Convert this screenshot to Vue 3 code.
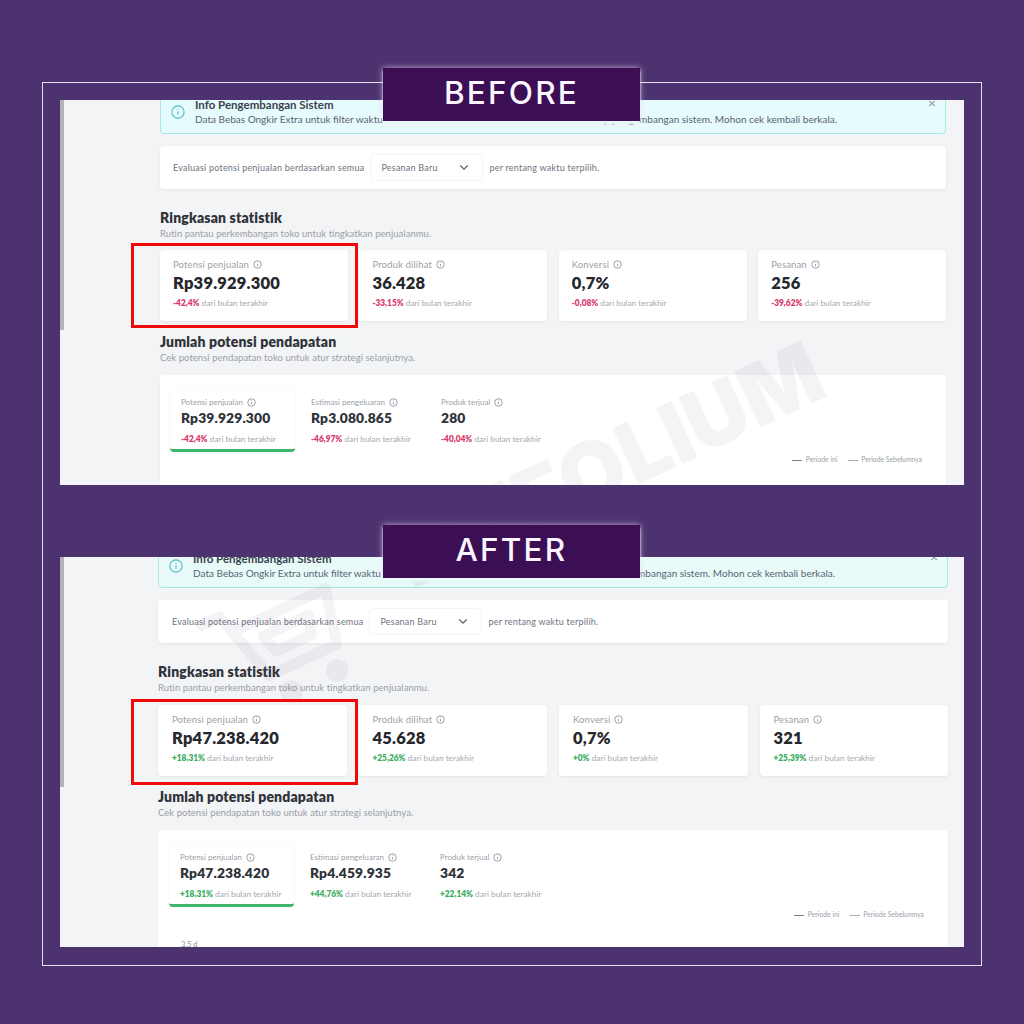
<template>
  <div class="page">
    <div class="frame">
      <section
        v-for="shot in shots"
        :key="shot.badge"
        :class="['shot-wrap', `shot-${shot.badge.toLowerCase()}`]"
      >
        <div class="shot">
          <span class="strip"></span>

          <!-- Alert, top part is cut off by the screenshot -->
          <div class="alert">
            <svg class="alert-icon" viewBox="0 0 16 16">
              <circle cx="8" cy="8" r="7" />
              <path d="M8 7.2v4M8 4.4v.9" />
            </svg>
            <div class="alert-text">
              <h4>Info Pengembangan Sistem</h4>
              <p>Data Bebas Ongkir Extra untuk filter waktu tertentu saat ini belum tersedia karena dalam tahap pengembangan sistem. Mohon cek kembali berkala.</p>
            </div>
            <span class="close">×</span>
          </div>

          <!-- Filter -->
          <div class="filter">
            <span>Evaluasi potensi penjualan berdasarkan semua</span>
            <div class="select">
              <span>Pesanan Baru</span>
              <svg viewBox="0 0 12 8"><path d="M1.5 1.5 6 6l4.5-4.5" /></svg>
            </div>
            <span>per rentang waktu terpilih.</span>
          </div>

          <h3 class="section-title first">Ringkasan statistik</h3>
          <p class="section-sub">Rutin pantau perkembangan toko untuk tingkatkan penjualanmu.</p>

          <div class="stat-grid">
            <div v-for="s in shot.stats" :key="s.label" class="stat-card">
              <div class="stat-label">
                {{ s.label }}
                <svg class="info" viewBox="0 0 12 12">
                  <circle cx="6" cy="6" r="5" />
                  <path d="M6 5.4v3M6 3.3v.7" />
                </svg>
              </div>
              <div class="stat-value">{{ s.value }}</div>
              <div class="stat-change">
                <b :class="shot.trend">{{ s.change }}</b> dari bulan terakhir
              </div>
            </div>
          </div>

          <h3 class="section-title second">Jumlah potensi pendapatan</h3>
          <p class="section-sub">Cek potensi pendapatan toko untuk atur strategi selanjutnya.</p>

          <div class="income-card">
            <div class="tabs">
              <div
                v-for="(t, i) in shot.tabs"
                :key="t.label"
                :class="['tab', { active: i === 0 }]"
              >
                <div class="tab-label">
                  {{ t.label }}
                  <svg class="info" viewBox="0 0 12 12">
                    <circle cx="6" cy="6" r="5" />
                    <path d="M6 5.4v3M6 3.3v.7" />
                  </svg>
                </div>
                <div class="tab-value">{{ t.value }}</div>
                <div class="tab-change">
                  <b :class="shot.trend">{{ t.change }}</b> dari bulan terakhir
                </div>
              </div>
            </div>
            <div class="legend">
              <span><i class="line"></i> Periode ini</span>
              <span><i class="line dashed"></i> Periode Sebelumnya</span>
            </div>
            <div v-if="shot.axis" class="axis">{{ shot.axis }}</div>
          </div>
        </div>

        <div class="badge">{{ shot.badge }}</div>
        <div class="highlight"></div>
      </section>
    </div>

    <!-- Watermark -->
    <svg class="wm-logo" viewBox="0 0 170 130">
      <g transform="translate(12 50) rotate(-25) scale(1.2)">
        <path d="M0 0h16l17 62h62l11-46H24" />
        <path d="M42 30h42l-5 16H47z" />
        <circle cx="44" cy="82" r="5" />
        <circle cx="86" cy="82" r="5" />
      </g>
    </svg>
    <div class="wm-text">LITFOLIUM</div>
  </div>
</template>

<script setup>
const shots = [
  {
    badge: 'BEFORE',
    trend: 'down',
    stats: [
      { label: 'Potensi penjualan', value: 'Rp39.929.300', change: '-42,4%' },
      { label: 'Produk dilihat', value: '36.428', change: '-33,15%' },
      { label: 'Konversi', value: '0,7%', change: '-0,08%' },
      { label: 'Pesanan', value: '256', change: '-39,62%' },
    ],
    tabs: [
      { label: 'Potensi penjualan', value: 'Rp39.929.300', change: '-42,4%' },
      { label: 'Estimasi pengeluaran', value: 'Rp3.080.865', change: '-46,97%' },
      { label: 'Produk terjual', value: '280', change: '-40,04%' },
    ],
  },
  {
    badge: 'AFTER',
    trend: 'up',
    axis: '3,5 d',
    stats: [
      { label: 'Potensi penjualan', value: 'Rp47.238.420', change: '+18,31%' },
      { label: 'Produk dilihat', value: '45.628', change: '+25,26%' },
      { label: 'Konversi', value: '0,7%', change: '+0%' },
      { label: 'Pesanan', value: '321', change: '+25,39%' },
    ],
    tabs: [
      { label: 'Potensi penjualan', value: 'Rp47.238.420', change: '+18,31%' },
      { label: 'Estimasi pengeluaran', value: 'Rp4.459.935', change: '+44,76%' },
      { label: 'Produk terjual', value: '342', change: '+22,14%' },
    ],
  },
]
</script>

<style scoped>
.page {
  position: relative;
  width: 1024px;
  height: 1024px;
  overflow: hidden;
  box-sizing: border-box;
  padding: 82px 42px 0;
  background: #4d3270;
  font-family: "Lato", "Noto Sans", sans-serif;
}
.frame {
  display: flex;
  flex-direction: column;
  gap: 72px;
  box-sizing: border-box;
  height: 884px;
  padding: 17px;
  border: 1px solid #e6def0;
}

/* SCREENSHOT */
.shot-wrap { position: relative; }
.shot {
  position: relative;
  height: 385px;
  overflow: hidden;
  box-sizing: border-box;
  padding: 0 18px 0 100px;
  background: #f3f4f6;
}
.shot-after .shot {
  height: 390px;
  padding: 0 16px 0 98px;
}
.strip {
  position: absolute;
  left: 0;
  top: 0;
  width: 4px;
  height: 230px;
  background: #b4b3ba;
}

/* ALERT */
.alert {
  display: flex;
  position: relative;
  gap: 10px;
  align-items: center;
  box-sizing: border-box;
  height: 50px;
  margin-top: -16px;
  padding: 8px 10px;
  border: 1px solid #a5e8e6;
  border-radius: 4px;
  background: #e6fbfc;
}
.shot-after .alert {
  margin-top: -19px;
  background: #e8fbf9;
}
.alert-icon {
  flex: none;
  width: 14px;
  height: 14px;
  margin-top: 6px;
  fill: none;
  stroke: #4cbcc6;
  stroke-width: 1.2;
}
.alert-text { padding-top: 5px; }
.alert h4 {
  margin: 0 0 2px;
  font-size: 11.5px;
  font-weight: 700;
  line-height: 13px;
  color: #3b4250;
}
.alert p {
  margin: 0;
  font-size: 10px;
  line-height: 13px;
  white-space: nowrap;
  color: #596273;
}
.close {
  position: absolute;
  top: 11px;
  right: 9px;
  font-size: 14px;
  line-height: 14px;
  color: #8a94a0;
}

/* FILTER */
.filter {
  display: flex;
  align-items: center;
  gap: 6px;
  box-sizing: border-box;
  height: 43px;
  margin-top: 12px;
  padding: 0 13px;
  border-radius: 4px;
  background: #fff;
  box-shadow: 0 1px 3px rgba(0, 0, 0, 0.07);
  font-size: 9px;
  letter-spacing: 0.22px;
  color: #6d7480;
}
.shot-after .filter { padding: 0 14px; }
.select {
  display: flex;
  align-items: center;
  justify-content: space-between;
  box-sizing: border-box;
  width: 113px;
  height: 27px;
  padding: 0 13px 0 10px;
  border: 1px solid #f4f5f6;
  border-radius: 4px;
}
.select svg {
  width: 10px;
  height: 7px;
  fill: none;
  stroke: #5d6470;
  stroke-width: 1.6;
}

/* HEADINGS */
.section-title {
  margin: 0;
  font-size: 14px;
  font-weight: 800;
  line-height: 18px;
  letter-spacing: 0.15px;
  color: #2f333a;
}
.section-title.first { margin-top: 20px; }
.section-title.second { margin-top: 12px; }
.section-sub {
  margin: 0;
  font-size: 9.5px;
  line-height: 14px;
  letter-spacing: 0.04px;
  color: #9a9fa8;
}

/* STAT CARDS */
.stat-grid {
  display: grid;
  grid-template-columns: repeat(4, 1fr);
  gap: 11.5px;
  margin-top: 9px;
}
.shot-after .stat-grid {
  gap: 12px;
  margin-top: 10px;
}
.stat-card {
  box-sizing: border-box;
  height: 71px;
  padding: 8px 13px 0;
  border-radius: 4px;
  background: #fff;
  box-shadow: 0 1px 3px rgba(0, 0, 0, 0.07);
}
.shot-after .stat-card { padding-left: 14px; }
.stat-label, .tab-label {
  display: flex;
  align-items: center;
  gap: 4px;
  color: #9a9fa8;
}
.stat-label {
  font-size: 9.5px;
  line-height: 13px;
  letter-spacing: 0.15px;
}
.info {
  flex: none;
  width: 9px;
  height: 9px;
  fill: none;
  stroke: #7b818b;
  stroke-width: 1;
}
.stat-value {
  margin-top: 1px;
  font-size: 16.5px;
  font-weight: 800;
  line-height: 22px;
  letter-spacing: 0.2px;
  color: #26282d;
}
.stat-change {
  margin-top: 3px;
  font-size: 8.3px;
  line-height: 12px;
  color: #a5a9b0;
}
.down { color: #d63a6a; font-weight: 800; }
.up { color: #3aae5f; font-weight: 800; }

/* INCOME CARD */
.income-card {
  position: relative;
  height: 300px;
  margin-top: 10px;
  padding: 15px 10px 0;
  box-sizing: border-box;
  border-radius: 4px;
  background: #fff;
  box-shadow: 0 1px 3px rgba(0, 0, 0, 0.05);
}
.shot-after .income-card { padding-left: 11px; }
.tabs {
  display: flex;
  gap: 5px;
}
.tab {
  box-sizing: border-box;
  width: 125px;
  height: 62px;
  padding: 6px 11px 0;
}
.tab.active {
  border-bottom: 3px solid #3fb56c;
  border-radius: 4px;
  box-shadow: 0 0 3px rgba(0, 0, 0, 0.05);
}
.tab-label {
  font-size: 8px;
  line-height: 12px;
}
.tab-value {
  margin-top: 0;
  font-size: 13.8px;
  font-weight: 800;
  line-height: 20px;
  letter-spacing: 0.15px;
  color: #2f333a;
}
.tab-change {
  margin-top: 5px;
  font-size: 8.3px;
  line-height: 12px;
  white-space: nowrap;
  color: #a5a9b0;
}
.legend {
  display: flex;
  justify-content: flex-end;
  gap: 10px;
  margin-top: 1px;
  padding-right: 14px;
  font-size: 6.8px;
  line-height: 12px;
  color: #9a9fa8;
}
.line {
  display: inline-block;
  width: 10px;
  margin-right: 2px;
  border-top: 1px solid #77808c;
  vertical-align: middle;
}
.line.dashed { border-top: 1px dashed #9aa1aa; }
.axis {
  margin: 20px 0 0 12px;
  font-size: 7.5px;
  color: #8a8f98;
}

/* OVERLAYS */
.badge {
  position: absolute;
  z-index: 3;
  top: -32px;
  left: 323px;
  width: 257px;
  height: 53px;
  background: #3c0f54;
  box-shadow: 0 3px 2px rgba(236, 250, 252, 0.95), 0 0 6px rgba(232, 214, 246, 0.75);
  font-family: "Inter", "Open Sans", sans-serif;
  font-size: 31.5px;
  font-weight: 500;
  line-height: 50px;
  letter-spacing: 2.2px;
  text-align: center;
  color: #fbf5ff;
}
.highlight {
  position: absolute;
  z-index: 2;
  top: 143px;
  left: 71px;
  width: 227px;
  height: 85px;
  box-sizing: border-box;
  border: 3px solid #f00a0a;
}
.shot-after .highlight {
  top: 142px;
  height: 86px;
}
.wm-logo {
  position: absolute;
  left: 190px;
  top: 575px;
  width: 170px;
  height: 130px;
  fill: none;
  stroke: rgba(70, 50, 110, 0.06);
  stroke-width: 9;
  stroke-linecap: round;
  stroke-linejoin: round;
}
.wm-text {
  position: absolute;
  left: 608px;
  top: 465px;
  font-family: "Inter", "Open Sans", sans-serif;
  font-size: 85px;
  font-weight: 900;
  line-height: 85px;
  white-space: nowrap;
  color: rgba(70, 50, 110, 0.06);
  transform: translate(-50%, -50%) rotate(-25deg);
}
</style>
